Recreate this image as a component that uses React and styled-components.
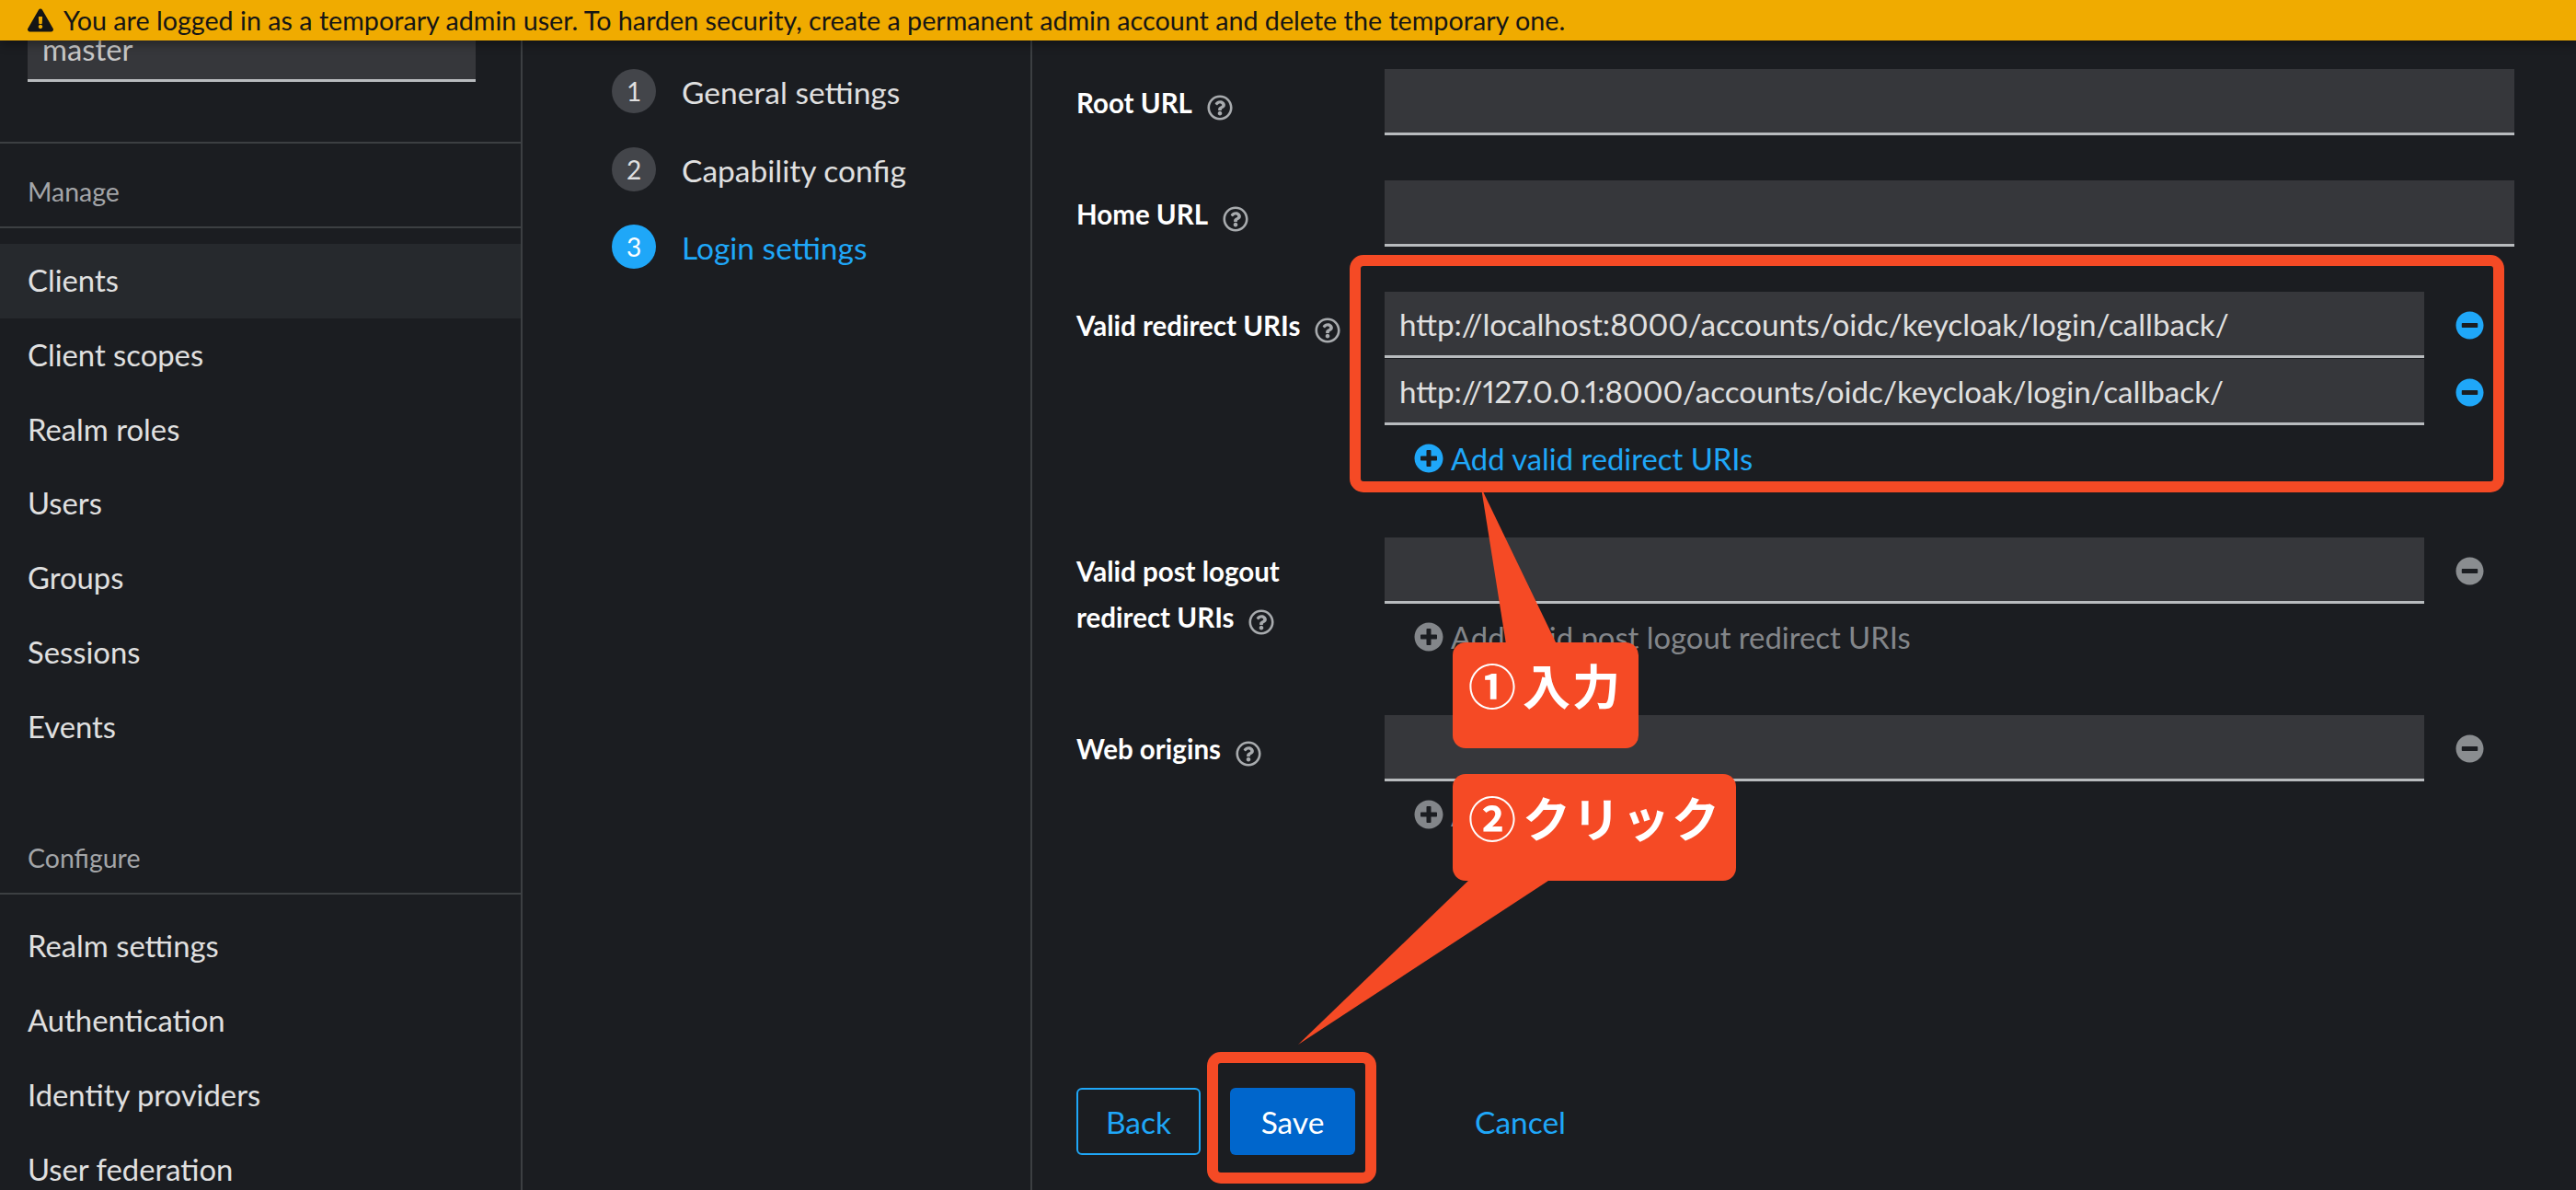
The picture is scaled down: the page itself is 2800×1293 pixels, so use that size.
import React from "react";
import styled, { createGlobalStyle } from "styled-components";
import { FaExclamationTriangle, FaMinusCircle, FaPlusCircle, FaRegQuestionCircle } from "react-icons/fa";

const Global = createGlobalStyle`
  html, body { margin: 0; padding: 0; background: #1b1d21; }
  body { font-family: "Lato", "Liberation Sans", sans-serif; }
  * { box-sizing: border-box; }
`;

const blue = "#1fa7f8";
const red = "#f54a25";

const Page = styled.div`
  position: relative; width: 2800px; height: 1293px; overflow: hidden;
  display: flex; flex-direction: column; background: #1b1d21; color: #e0e0e0;
`;
const Banner = styled.div`
  flex: none; height: 44px; background: #f0ab00; color: #151515;
  display: flex; align-items: center; gap: 11px; padding-left: 30px;
  font-size: 28.7px; white-space: nowrap; position: relative; z-index: 2;
  box-shadow: 0 4px 10px rgba(0,0,0,.35);
  svg { width: 28px; height: 28px; flex: none; }
`;
const Body = styled.div`
  flex: 1; min-height: 0; display: grid; grid-template-columns: 568px 554px 1fr;
`;
const Sidebar = styled.nav`
  border-right: 2px solid #3c3f42; overflow: hidden; font-size: 32.8px;
`;
const RealmField = styled.div`
  height: 45px; margin: 0 49px 65px 30px; padding-left: 16px; background: #36373b;
  border-bottom: 3px solid #b8bbbe; line-height: 20px; color: #c7c7c7; font-size: 32.8px;
  overflow: hidden;
`;
const SectionHead = styled.div`
  color: #a3a5a8; font-size: 28.5px; line-height: 40px;
  padding: ${p => p.$ruled ? "32px 0 18px 30px" : "0 0 18px 30px"};
  margin-top: ${p => p.$ruled ? "0" : "82px"};
  border-top: ${p => p.$ruled ? "2px solid #3c3f42" : "none"};
  border-bottom: 2px solid #3c3f42;
`;
const NavList = styled.div`
  margin-top: ${p => p.$gap}px;
`;
const NavItem = styled.div`
  height: 80.75px; line-height: 80px; padding-left: 30px; color: #e0e0e0;
  background: ${p => p.$active ? "#26292d" : "transparent"};
`;
const Stepper = styled.div`
  border-right: 2px solid #3c3f42; padding: 31px 0 0 97px;
  display: flex; flex-direction: column; gap: 36.5px;
`;
const Step = styled.div`
  display: flex; align-items: center; gap: 28px; height: 48px; font-size: 33.5px;
  color: ${p => p.$current ? blue : "#e0e0e0"};
`;
const StepNumber = styled.span`
  width: 48px; height: 48px; border-radius: 50%; flex: none;
  display: flex; align-items: center; justify-content: center; font-size: 28px;
  background: ${p => p.$current ? blue : "#43454a"};
  color: ${p => p.$current ? "#ffffff" : "#e0e0e0"};
`;
const StepLabel = styled.span`
  padding-top: 2px;
`;
const Form = styled.main`
  padding: 31px 67px 38px 48px; display: flex; flex-direction: column;
`;
const Row = styled.div`
  display: grid; grid-template-columns: 335px 1fr; margin-bottom: ${p => p.$after}px;
`;
const Label = styled.div`
  font-size: 29.5px; font-weight: 700; color: #ffffff; line-height: 50px; padding-top: 12px;
  max-width: 310px;
`;
const HelpMark = styled(FaRegQuestionCircle)`
  width: 28px; height: 28px; color: #a8abae; margin-left: 16px; vertical-align: -8px;
`;
const Field = styled.div`
  height: 72px; background: #36373b; border-bottom: 3px solid #b8bbbe;
  padding: 0 16px; line-height: 71px; font-size: 33.2px; color: #e0e0e0; white-space: nowrap;
  font-variant-numeric: proportional-nums;
`;
const FieldList = styled.div`
  display: flex; flex-direction: column; gap: 1px;
`;
const FieldRow = styled.div`
  display: grid; grid-template-columns: 1130px 1fr; align-items: center;
`;
const RemoveButton = styled.span`
  display: flex; justify-content: center; margin-left: 0;
  color: ${p => p.$on ? blue : "#8a8d90"};
  svg { width: 31px; height: 31px; }
`;
const AddLink = styled.div`
  height: 36px; margin: 18px 0 0 32px; display: flex; align-items: center; gap: 8px;
  font-size: 32.8px; white-space: nowrap;
  color: ${p => p.$on ? blue : "#83868a"};
  svg { width: 32px; height: 32px; flex: none; }
`;
const Actions = styled.div`
  margin-top: auto; display: flex; align-items: stretch; height: 73px; font-size: 33.5px;
`;
const BackButton = styled.div`
  width: 135px; border: 2px solid ${blue}; border-radius: 6px; color: ${blue};
  display: flex; align-items: center; justify-content: center;
`;
const SaveButton = styled.div`
  width: 136px; margin-left: 32px; background: #0066cc; border-radius: 6px; color: #ffffff;
  display: flex; align-items: center; justify-content: center;
`;
const CancelLink = styled.div`
  margin-left: 130px; color: ${blue}; display: flex; align-items: center;
`;
const Frame = styled.div`
  position: absolute; z-index: 3; border: 12px solid ${red}; border-radius: 15px;
  left: ${p => p.$x}px; top: ${p => p.$y}px; width: ${p => p.$w}px; height: ${p => p.$h}px;
`;
const Pointers = styled.svg`
  position: absolute; z-index: 3; left: 0; top: 0; width: 2800px; height: 1293px;
  pointer-events: none;
`;
const Callout = styled.div`
  position: absolute; z-index: 4; background: ${red}; border-radius: 14px; color: #ffffff;
  left: ${p => p.$x}px; top: ${p => p.$y}px; width: ${p => p.$w}px; height: ${p => p.$h}px;
  display: flex; align-items: center; padding: 0 0 24px 17px; white-space: nowrap;
  font-family: "Noto Sans CJK JP", "Lato", sans-serif; font-weight: 700; font-size: 52px; letter-spacing: 2px;
`;
const CalloutMark = styled.span`
  margin-right: 5px;
`;

const nav1 = ["Clients", "Client scopes", "Realm roles", "Users", "Groups", "Sessions", "Events"];
const nav2 = ["Realm settings", "Authentication", "Identity providers", "User federation"];
const steps = ["General settings", "Capability config", "Login settings"];

export default function App() {
  return (
    <Page>
      <Global />
      <Banner>
        <FaExclamationTriangle />
        <span>You are logged in as a temporary admin user. To harden security, create a permanent admin account and delete the temporary one.</span>
      </Banner>
      <Body>
        <Sidebar>
          <RealmField>master</RealmField>
          <SectionHead $ruled>Manage</SectionHead>
          <NavList $gap={17}>
            {nav1.map((n, i) => <NavItem key={n} $active={i === 0}>{n}</NavItem>)}
          </NavList>
          <SectionHead>Configure</SectionHead>
          <NavList $gap={16}>
            {nav2.map(n => <NavItem key={n}>{n}</NavItem>)}
          </NavList>
        </Sidebar>
        <Stepper>
          {steps.map((s, i) => (
            <Step key={s} $current={i === 2}>
              <StepNumber $current={i === 2}>{i + 1}</StepNumber>
              <StepLabel>{s}</StepLabel>
            </Step>
          ))}
        </Stepper>
        <Form>
          <Row $after={49}>
            <Label>Root URL<HelpMark /></Label>
            <Field />
          </Row>
          <Row $after={49}>
            <Label>Home URL<HelpMark /></Label>
            <Field />
          </Row>
          <Row $after={68}>
            <Label>Valid redirect URIs<HelpMark /></Label>
            <div>
              <FieldList>
                <FieldRow>
                  <Field>http://localhost:8000/accounts/oidc/keycloak/login/callback/</Field>
                  <RemoveButton $on><FaMinusCircle /></RemoveButton>
                </FieldRow>
                <FieldRow>
                  <Field>http://127.0.0.1:8000/accounts/oidc/keycloak/login/callback/</Field>
                  <RemoveButton $on><FaMinusCircle /></RemoveButton>
                </FieldRow>
              </FieldList>
              <AddLink $on><FaPlusCircle />Add valid redirect URIs</AddLink>
            </div>
          </Row>
          <Row $after={67}>
            <Label>Valid post logout redirect URIs<HelpMark /></Label>
            <div>
              <FieldRow>
                <Field />
                <RemoveButton><FaMinusCircle /></RemoveButton>
              </FieldRow>
              <AddLink><FaPlusCircle />Add valid post logout redirect URIs</AddLink>
            </div>
          </Row>
          <Row $after={0}>
            <Label>Web origins<HelpMark /></Label>
            <div>
              <FieldRow>
                <Field />
                <RemoveButton><FaMinusCircle /></RemoveButton>
              </FieldRow>
              <AddLink><FaPlusCircle />Add valid web origins</AddLink>
            </div>
          </Row>
          <Actions>
            <BackButton>Back</BackButton>
            <SaveButton>Save</SaveButton>
            <CancelLink>Cancel</CancelLink>
          </Actions>
        </Form>
      </Body>
      <Frame $x={1467} $y={277} $w={1255} $h={258} />
      <Frame $x={1312} $y={1143} $w={184} $h={143} />
      <Pointers viewBox="0 0 2800 1293">
        <polygon points="1610,530 1637,700 1692,700" fill={red} />
        <polygon points="1598,955 1686,955 1411,1135" fill={red} />
      </Pointers>
      <Callout $x={1579} $y={698} $w={202} $h={115}><CalloutMark>①</CalloutMark>入力</Callout>
      <Callout $x={1579} $y={841} $w={308} $h={116}><CalloutMark>②</CalloutMark>クリック</Callout>
    </Page>
  );
}
